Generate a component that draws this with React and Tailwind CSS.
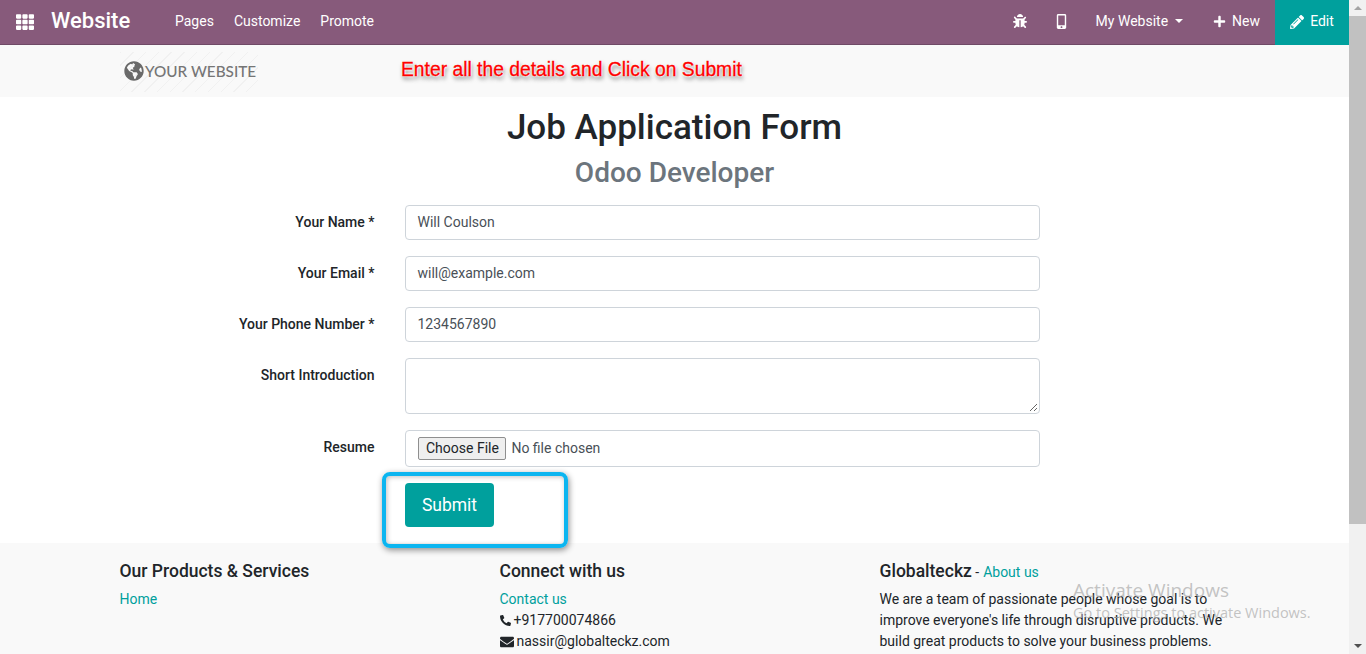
import React from 'react';
import { FaTh, FaBug, FaMobileAlt, FaPlus, FaPencilAlt, FaPhoneAlt, FaEnvelope, FaGlobeAmericas } from 'react-icons/fa';

const fields = [
  { label: 'Your Name *', value: 'Will Coulson' },
  { label: 'Your Email *', value: 'will@example.com' },
  { label: 'Your Phone Number *', value: '1234567890' },
];

const TopBar = () => (
  <nav className="h-[45px] shrink-0 flex items-stretch bg-[#875a7b] border-b border-[#6f4a66] text-white text-[14px]">
    <div className="w-[51px] flex items-center justify-center pr-[1px] pb-[1px]">
      <FaTh className="w-[18px] h-[18px]" />
    </div>
    <div className="text-[22px] font-medium leading-[42px] w-[124px]">Website</div>
    <div className="flex items-center gap-[20px] pb-[2px]">
      <span>Pages</span>
      <span>Customize</span>
      <span>Promote</span>
    </div>
    <div className="flex-1" />
    <div className="flex items-center pb-[2px]">
      <FaBug className="w-[14px] h-[14px] mr-[28.5px]" />
      <FaMobileAlt className="w-[11px] h-[15px] mr-[29px]" />
      <span>My Website</span>
      <span className="ml-[7px] mr-[30px] w-0 h-0 border-x-[4px] border-x-transparent border-t-[4px] border-t-white" />
      <FaPlus className="w-[13px] h-[13px] mr-[6px]" />
      <span className="mr-[15px]">New</span>
    </div>
    <div className="w-[74px] h-[45px] bg-[#00a09d] flex items-center justify-center gap-[6px] pb-[2px]">
      <FaPencilAlt className="w-[14px] h-[14px]" />
      <span>Edit</span>
    </div>
  </nav>
);

const Logo = () => (
  <div className="w-[138px] h-[40px] flex items-center bg-[repeating-linear-gradient(135deg,#f1f1f1_0px,#f1f1f1_1px,#f9f9f9_1px,#f9f9f9_9px)]">
    <FaGlobeAmericas className="ml-[4px] w-[20px] h-[20px] text-[#6a6a6a] -mt-[2px]" />
    <span className="ml-[1px] -mt-[2px] text-[15.3px] font-['Lato',sans-serif] text-[#757575] font-medium whitespace-nowrap">YOUR WEBSITE</span>
  </div>
);

const Row = ({ label, className, children }) => (
  <div className={`flex gap-[30.5px] ${className}`}>
    <label className="w-[254.5px] text-right font-medium text-[14px] text-[#212529] pt-[7px] leading-[21px]">{label}</label>
    <div className="w-[635px]">{children}</div>
  </div>
);

const Form = () => (
  <main className="h-[446px] shrink-0 bg-white">
    <h1 className="text-center text-[35px] font-medium text-[#212529] leading-[43px] pt-[9px] h-[53px]">Job Application Form</h1>
    <h2 className="text-center text-[28px] font-medium text-[#6c757d] leading-[34px] mt-[6px] h-[49px]">Odoo Developer</h2>
    <div className="pl-[120px]">
      {fields.map((f) => (
        <Row key={f.label} label={f.label} className="mb-[16px]">
          <div className="h-[35px] border border-[#ced4da] rounded-[4px] pl-[11.5px] pr-[12px] flex items-center text-[14px] text-[#495057]">{f.value}</div>
        </Row>
      ))}
      <Row label="Short Introduction" className="mb-[16px]">
        <div className="relative h-[56px] border border-[#ced4da] rounded-[4px]">
          <svg className="absolute right-[1px] bottom-[1px]" width="10" height="10" viewBox="0 0 10 10">
            <path d="M9 2 L2 9 M9 6 L6 9" stroke="#666" strokeWidth="1" fill="none" />
          </svg>
        </div>
      </Row>
      <Row label="Resume" className="mb-[16px]">
        <div className="h-[37px] border border-[#ced4da] rounded-[4px] pl-[12px] pr-[12px] flex items-center text-[14px] text-[#495057]">
          <span className="h-[23px] pl-[7px] pr-[6.5px] flex items-center bg-[#efefef] border border-[#8f8f8f] rounded-[2px] text-[#212529] mr-[5px]">Choose File</span>
          No file chosen
        </div>
      </Row>
      <div className="pl-[285px]">
        <button className="w-[89px] h-[44px] bg-[#00a09d] rounded-[4px] text-white text-[17.5px] border-0">Submit</button>
      </div>
    </div>
  </main>
);

const Footer = () => (
  <footer className="flex-1 bg-[#f9f9f9] pl-[119.5px] pt-[18px] flex text-[14px] text-[#212529] leading-[21px]">
    <div className="w-[380px]">
      <h5 className="text-[17.5px] font-medium leading-[21px] mb-[7px]">Our Products &amp; Services</h5>
      <a className="text-[#00a09d]">Home</a>
    </div>
    <div className="w-[380px]">
      <h5 className="text-[17.5px] font-medium leading-[21px] mb-[7px]">Connect with us</h5>
      <div className="text-[#00a09d]">Contact us</div>
      <div className="flex items-center"><FaPhoneAlt className="w-[11px] h-[11px] mr-[3px]" />+917700074866</div>
      <div className="flex items-center"><FaEnvelope className="w-[14px] h-[14px] mr-[3px]" />nassir@globalteckz.com</div>
    </div>
    <div className="w-[345px]">
      <h5 className="leading-[21px] mb-[6px]">
        <span className="text-[17.5px] font-medium">Globalteckz</span> - <span className="text-[#00a09d] ml-[0.5px]">About us</span>
      </h5>
      <p>We are a team of passionate people whose goal is to improve everyone's life through disruptive products. We build great products to solve your business problems.</p>
    </div>
  </footer>
);

const Scrollbar = () => (
  <div className="w-[17px] h-full bg-[#f1f1f1] flex flex-col items-center">
    <div className="h-[16px] flex items-center justify-center">
      <span className="w-0 h-0 border-x-[4px] border-x-transparent border-b-[4px] border-b-[#a3a3a3]" />
    </div>
    <div className="w-full h-[508px] bg-[#c1c1c1]" />
    <div className="flex-1" />
    <div className="h-[16px] flex items-center justify-center">
      <span className="w-0 h-0 border-x-[4px] border-x-transparent border-t-[4px] border-t-[#505050]" />
    </div>
  </div>
);

export default function App() {
  return (
    <div className="relative h-[654px] w-[1366px] flex overflow-hidden font-['Roboto',sans-serif]">
      <div className="w-[1349px] h-full flex flex-col">
        <TopBar />
        <header className="h-[52px] bg-[#f9f9f9] pl-[120px] pt-[7px] shrink-0">
          <Logo />
        </header>
        <Form />
        <Footer />
      </div>
      <Scrollbar />

      {/* annotations painted over the screenshot */}
      <div className="absolute left-[401px] top-[58px] text-[19.3px] leading-[24px] font-['Liberation_Sans',sans-serif] text-[#ff0000] whitespace-nowrap [-webkit-text-stroke:0.3px_#ff0000] [text-shadow:0_0_2px_#fff,0_0_2px_#fff,0_0_2px_#fff,1px_3px_4px_#666]">
        Enter all the details and Click on Submit
      </div>
      <div className="absolute left-[382px] top-[472px] w-[186px] h-[76px] border-[4px] border-[#0bb5f0] rounded-[8px] shadow-[1px_2px_6px_rgba(0,0,0,0.45),inset_1px_1px_5px_rgba(0,0,0,0.25)]" />
      <div className="absolute left-[1073px] top-[577px] text-[#b4b4b4]/80 font-['Open_Sans',sans-serif] pointer-events-none whitespace-nowrap">
        <div className="text-[19px] leading-[26px]">Activate Windows</div>
        <div className="text-[14.5px] leading-[20px]">Go to Settings to activate Windows.</div>
      </div>
    </div>
  );
}
